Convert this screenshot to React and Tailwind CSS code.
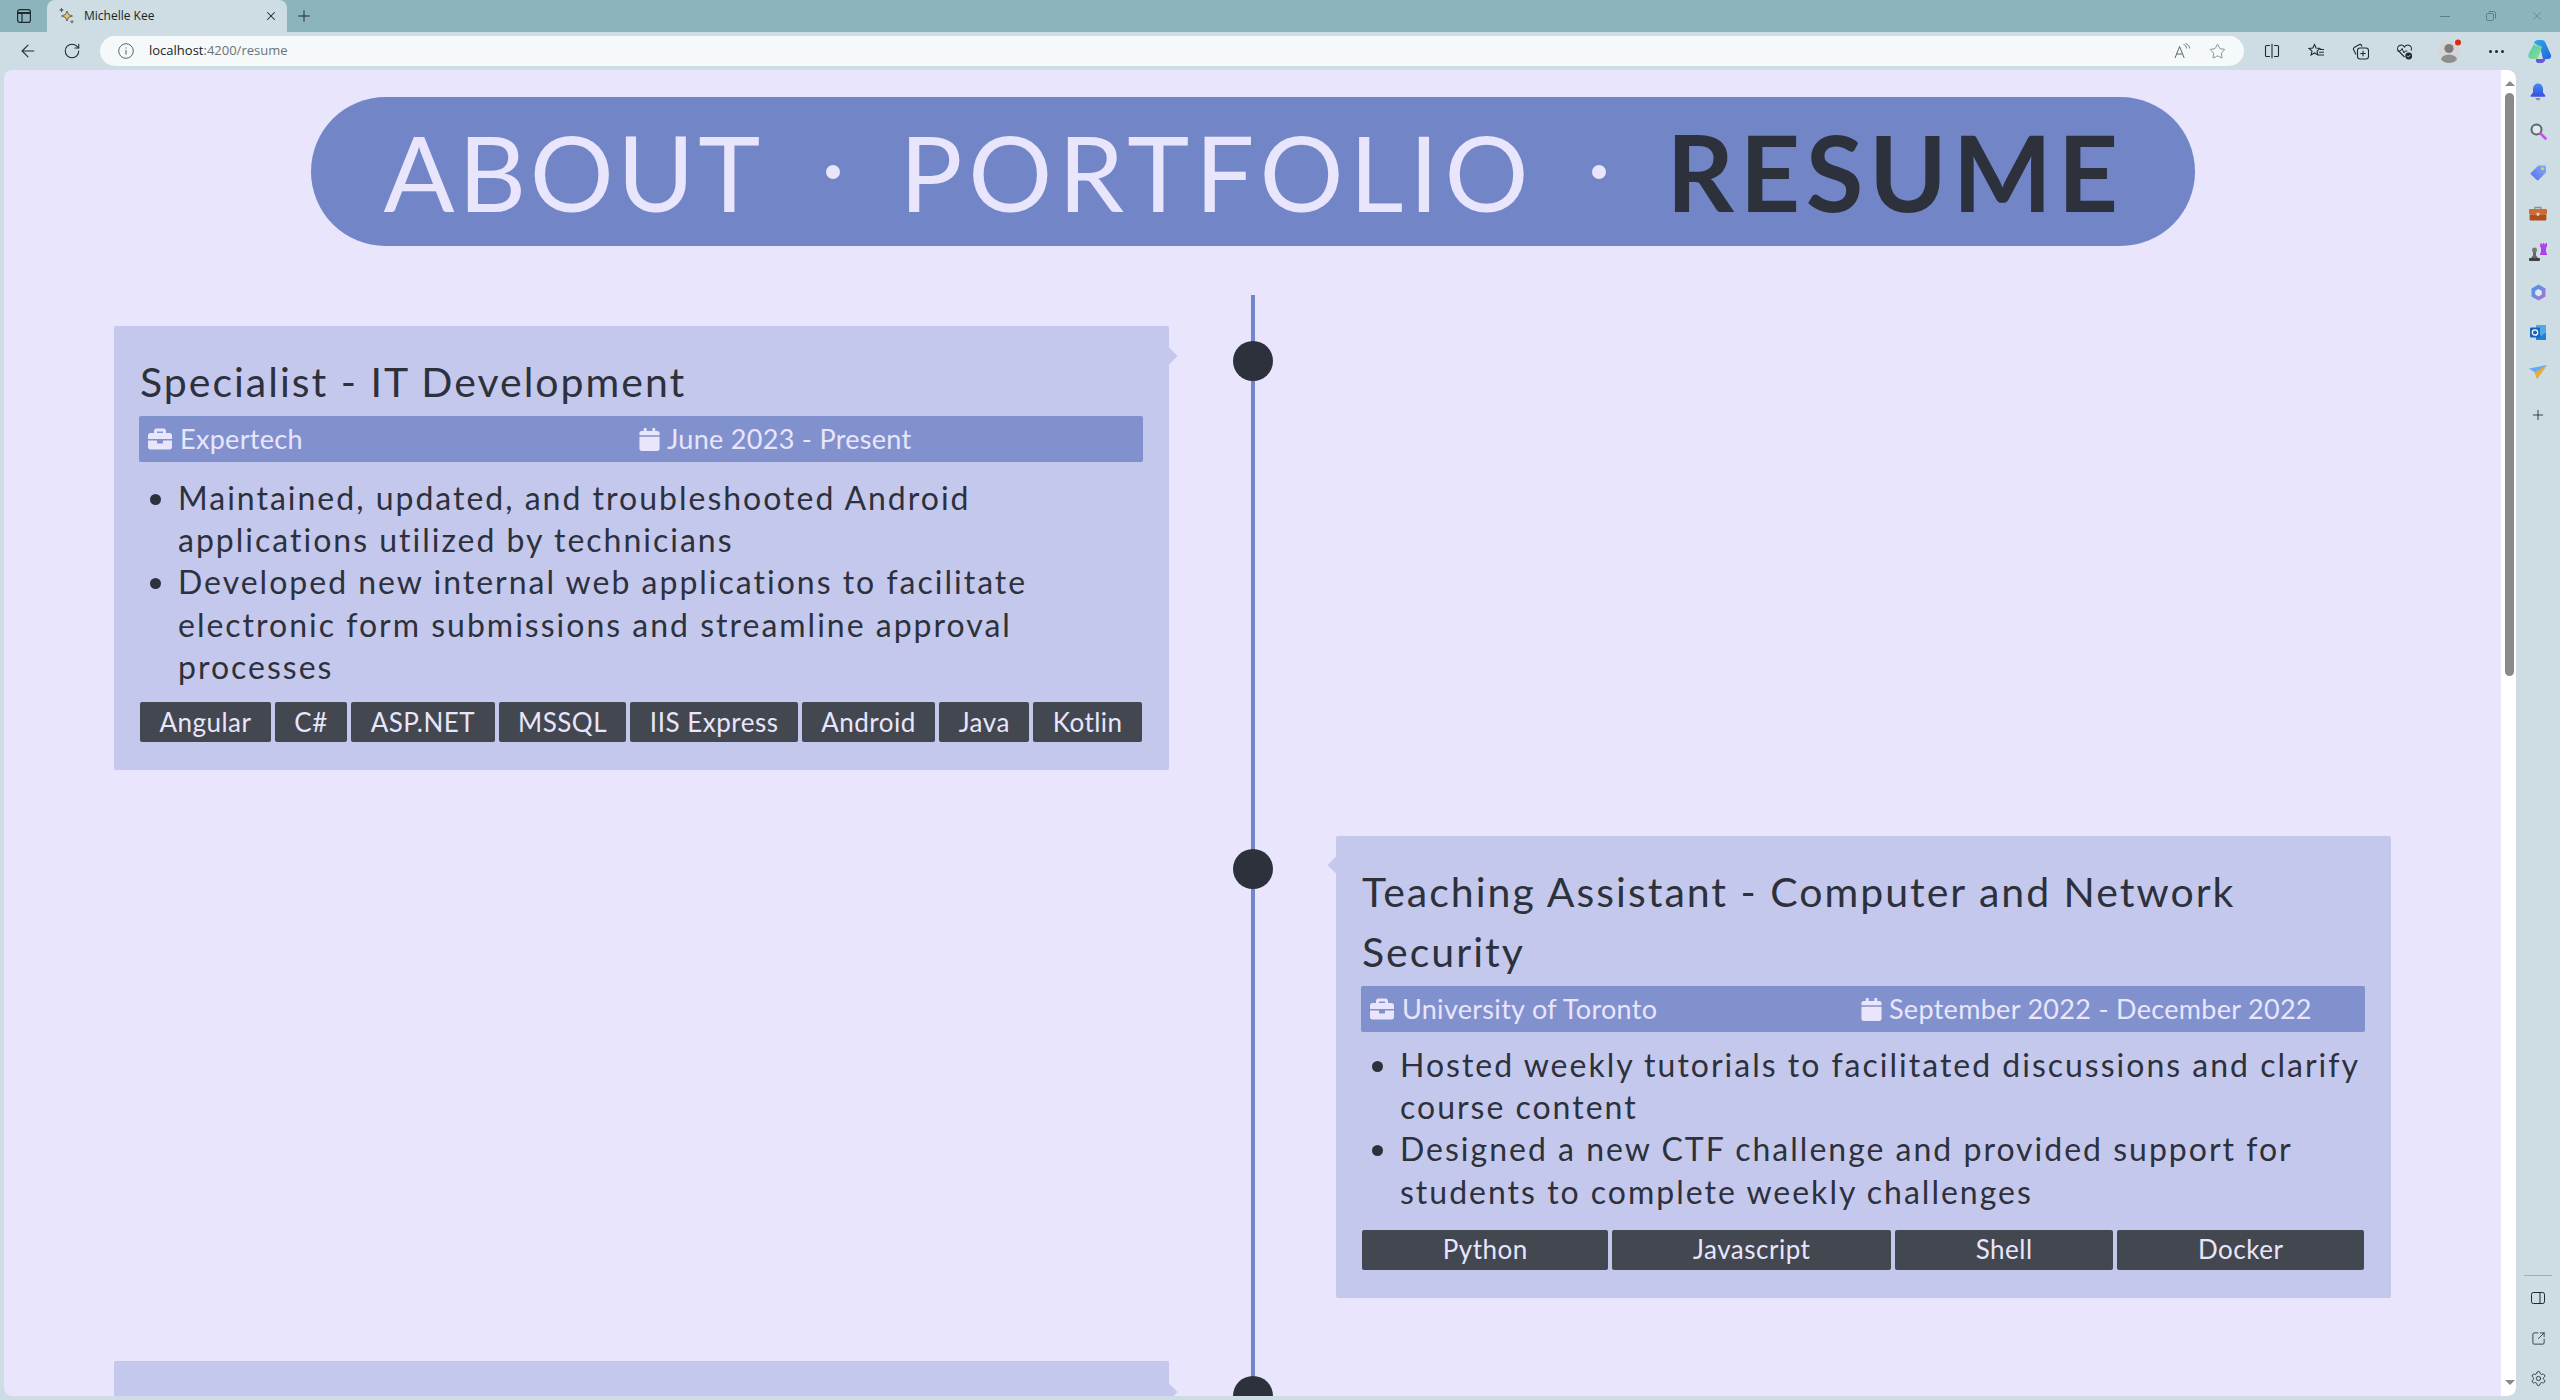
import React from "react";
import { ArrowLeft, RotateCw, X, Plus, Star, Settings, SquareArrowOutUpRight } from "lucide-react";
import { FaBriefcase, FaCalendar } from "react-icons/fa";

const TabsIcon = () => (
  <svg width="16" height="16" viewBox="0 0 16 16" fill="none" stroke="#1f2a30" strokeWidth="1.2">
    <rect x="1.6" y="1.6" width="12.8" height="12.8" rx="2.2" />
    <path d="M1.6 5h12.8" strokeWidth="2" />
    <path d="M6 5v9.4" />
  </svg>
);
const Sparkles = () => (
  <svg width="18" height="18" viewBox="0 0 18 18">
    <path d="M9 4l1.6 3.6L14.5 9l-3.9 1.4L9 14l-1.6-3.6L3.5 9l3.9-1.4z" fill="#e8c46a" stroke="#3b3b3b" strokeWidth=".7" />
    <path d="M3.5 0.5l.8 1.7 1.7.8-1.7.8-.8 1.7-.8-1.7L1 3l1.7-.8z" fill="#57534e" />
    <path d="M14 12.5l.7 1.6 1.6.7-1.6.7-.7 1.6-.7-1.6-1.6-.7 1.6-.7z" fill="#78716c" />
  </svg>
);
const InfoCircle = () => (
  <svg width="16" height="16" viewBox="0 0 16 16" fill="none" stroke="#5f6668" strokeWidth="1">
    <circle cx="8" cy="8" r="7.3" />
    <path d="M8 7v4.5M8 4.4v1.2" strokeWidth="1.1" />
  </svg>
);
const ReadAloud = () => (
  <svg width="17" height="16" viewBox="0 0 17 16" fill="none" stroke="#5f6668" strokeWidth="1">
    <path d="M1 15L5.6 3.5 10.2 15M2.6 11h6" />
    <path d="M9.5 1.5c2 .6 3 2 3.2 4M11.5 0.5c2.4.8 4 2.6 4.2 5" strokeWidth=".9" />
  </svg>
);
const SplitIcon = () => (
  <svg width="16" height="16" viewBox="0 0 16 16" fill="none" stroke="#1f2a30" strokeWidth="1.1">
    <path d="M6 2.5H2.5a1 1 0 0 0-1 1v9a1 1 0 0 0 1 1H6M10 2.5h3.5a1 1 0 0 1 1 1v9a1 1 0 0 1-1 1H10M8 .8v14.4" />
  </svg>
);
const FavIcon = () => (
  <svg width="17" height="17" viewBox="0 0 17 17" fill="none" stroke="#1f2a30" strokeWidth="1.1">
    <path d="M6.5 1.5l1.6 3.6 3.8.4-2.9 2.6.9 3.9-3.4-2-3.4 2 .9-3.9L1 5.5l3.800-.4z" />
    <path d="M12 6.500h4M11 9.200h5M10.500 12h5.500" />
  </svg>
);
const CollectIcon = () => (
  <svg width="17" height="17" viewBox="0 0 17 17" fill="none" stroke="#1f2a30" strokeWidth="1.1">
    <path d="M4 11.500L1.500 6.500a1.500 1.500 0 0 1 .7-2L7.500 1.500a1.500 1.500 0 0 1 1.800.6L10 3.500" />
    <rect x="5.500" y="5" width="11" height="11" rx="2.500" />
    <path d="M11 7.800v5.400M8.300 10.500h5.400" />
  </svg>
);
const HeartIcon = () => (
  <svg width="17" height="17" viewBox="0 0 17 17" fill="none">
    <path d="M8.500 14L2 7.500A3.400 3.400 0 0 1 8.500 4a3.400 3.400 0 0 1 6.500 3.500" stroke="#1f2a30" strokeWidth="1.1" />
    <path d="M1.500 8h3l1.500-2.500L8 10l1.300-2h2" stroke="#1f2a30" strokeWidth="1" />
    <circle cx="12.700" cy="13" r="3.400" fill="#1f2a30" />
    <path d="M11.200 13l1.100 1.100 1.900-2" stroke="#fff" strokeWidth=".8" />
  </svg>
);
const Profile = () => (
  <svg width="24" height="24" viewBox="0 0 24 24">
    <defs><clipPath id="pc"><circle cx="11" cy="13" r="11" /></clipPath></defs>
    <circle cx="11" cy="13" r="11" fill="#d6d6d6" />
    <g clipPath="url(#pc)">
      <circle cx="11" cy="9.500" r="4.600" fill="#7d7d7d" />
      <ellipse cx="11" cy="21" rx="8" ry="5.600" fill="#8e8e8e" />
    </g>
    <circle cx="20" cy="3.600" r="3" fill="#d92b14" />
  </svg>
);
const Copilot = () => (
  <svg width="25" height="23" viewBox="0 0 25 23">
    <defs>
      <linearGradient id="c1" x1="0" y1="0" x2="1" y2="1"><stop offset="0" stopColor="#38a9ee" /><stop offset="1" stopColor="#1f63dc" /></linearGradient>
      <linearGradient id="c2" x1="0" y1="0" x2="1" y2="1"><stop offset="0" stopColor="#4cc7b0" /><stop offset="1" stopColor="#8fe08c" /></linearGradient>
      <linearGradient id="c3" x1="0" y1="0" x2="1" y2="1"><stop offset="0" stopColor="#2c6de6" /><stop offset="1" stopColor="#8a4fd8" /></linearGradient>
    </defs>
    <path d="M7 3c.6-1.800 2-3 4-3h4c1.600 0 2.800 1 3.300 2.500L24 15c.6 2.200-1 4-3 4h-5L13 7z" fill="url(#c1)" />
    <path d="M7 4L2 13c-1.500 3-.5 6 3 6h3.500c1.500 0 2.600-1 3-2.300L15 7c-2-2.500-5-2-6-1z" fill="url(#c2)" />
    <path d="M9 19h7c1.800 0 2.800-1 3.300-2.500L20 15l-2 5.500c-.6 1.500-1.800 2.500-3.400 2.500H11c-1.500 0-2.500-2-2-4z" fill="url(#c3)" />
  </svg>
);

const Bell = () => (
  <svg width="16" height="18" viewBox="0 0 16 18">
    <defs><linearGradient id="b1" x1="0" y1="0" x2="0" y2="1"><stop offset="0" stopColor="#3f8cf0" /><stop offset="1" stopColor="#3a4fe0" /></linearGradient></defs>
    <path d="M8 0.500c-3 0-5 2.500-5 5.500v3.500L.7 12.500c-.3.600 0 1.200.7 1.200h13.200c.7 0 1-.6.7-1.200L13 9.500V6c0-3-2-5.500-5-5.500z" fill="url(#b1)" />
    <path d="M5.500 15h5c-.3 1.500-1.200 2.500-2.500 2.500S5.800 16.500 5.500 15z" fill="#8a8f98" />
  </svg>
);
const Search = () => (
  <svg width="17" height="17" viewBox="0 0 17 17" fill="none">
    <circle cx="6.500" cy="6.500" r="5" stroke="#5c6470" strokeWidth="2" fill="#dfe9ee" />
    <path d="M10.500 10.500l5 5" stroke="#c850e0" strokeWidth="2.600" strokeLinecap="round" />
  </svg>
);
const Tag = () => (
  <svg width="17" height="17" viewBox="0 0 17 17">
    <defs><linearGradient id="t1" x1="0" y1="1" x2="1" y2="0"><stop offset="0" stopColor="#5a6cf0" /><stop offset="1" stopColor="#7ab0fa" /></linearGradient></defs>
    <path d="M9 1.500h6c.6 0 1 .4 1 1V8c0 .5-.2.800-.5 1.100L8.500 16c-.5.500-1.200.500-1.700 0L1 10.500c-.500-.5-.500-1.200 0-1.700l7-7c.300-.2.600-.3 1-.3z" fill="url(#t1)" />
    <circle cx="12.500" cy="4.800" r="1.500" fill="#f6d23c" />
  </svg>
);
const Toolbox = () => (
  <svg width="18" height="15" viewBox="0 0 18 15">
    <path d="M6 3V1.500h6V3" fill="none" stroke="#8f8f8f" strokeWidth="1.300" />
    <rect x="0" y="3" width="18" height="5.500" rx="1" fill="#d36a2b" />
    <rect x="0.600" y="8.500" width="16.800" height="6" rx="1" fill="#b24c1b" />
    <rect x="7.700" y="6.800" width="2.600" height="3" rx=".5" fill="#d6d6d6" />
  </svg>
);
const Chess = () => (
  <svg width="18" height="18" viewBox="0 0 18 18">
    <path d="M11.500 0h1.200v1.200h1.300V0h1.200v1.200h1.300V0H18v3.500l-1 1.200V9l1 2v1h-7v-1l1-2V4.700l-1-1.200z" fill="#b040ee" />
    <circle cx="5.500" cy="7" r="2.500" fill="#777" />
    <path d="M4 9h3v3.500l2 2.500H2l2-2.500z" fill="#666" />
    <rect x="0" y="15" width="11" height="3" rx="1" fill="#3f3f3f" />
  </svg>
);
const M365 = () => (
  <svg width="17" height="17" viewBox="0 0 17 17">
    <defs><linearGradient id="m1" x1="0" y1="0" x2="1" y2="1"><stop offset="0" stopColor="#3aa0e8" /><stop offset="1" stopColor="#b46cd8" /></linearGradient></defs>
    <path d="M8.500.500L15.500 4.500v8l-7 4-7-4v-8z" fill="url(#m1)" />
    <path d="M8.500 5l3.300 1.900v3.600L8.500 12.400 5.200 10.500V6.900z" fill="#dfe9ee" />
  </svg>
);
const Outlook = () => (
  <svg width="17" height="17" viewBox="0 0 17 17">
    <path d="M6 1h10v15H6z" fill="#50a8e8" />
    <path d="M6 8.500l5 3.500 5-3.500V16H6z" fill="#1b80d8" />
    <rect x="0" y="3.500" width="10" height="10" rx="1" fill="#1363c0" />
    <circle cx="5" cy="8.500" r="2.700" fill="none" stroke="#fff" strokeWidth="1.300" />
  </svg>
);
const Plane = () => (
  <svg width="18" height="14" viewBox="0 0 18 14">
    <path d="M0 3.500L18 0 8 14 6 7.500z" fill="#6aa8f5" />
    <path d="M18 0L6 7.500 8 14z" fill="#eeae2c" />
  </svg>
);
const PanelIcon = () => (
  <svg width="14" height="14" viewBox="0 0 14 14" fill="none" stroke="#1f2a30" strokeWidth="1">
    <rect x=".5" y="1.500" width="13" height="11" rx="1.800" />
    <path d="M9 1.500v11" />
  </svg>
);

const Chrome = () => (
  <>
    <div className="flex h-8 w-full bg-[#8bb4bd]">
      <div className="flex w-[47px] items-center justify-center"><TabsIcon /></div>
      <div className="flex w-[240px] items-center rounded-t-lg bg-[#cddde3] pl-[11px] pr-2 text-[12px] text-[#1b2326]">
        <Sparkles />
        <span className="ml-[8px] flex-1">Michelle Kee</span>
        <X size={14} strokeWidth={1.800} className="mr-[1px]" color="#1f2a30" />
      </div>
      <div className="flex w-[34px] items-center justify-center"><Plus size={18} strokeWidth={1.300} color="#1f2a30" /></div>
      <div className="flex-1" />
      <div className="flex w-[46px] items-center justify-center"><div className="h-px w-[10px] bg-[#5d7f87]" /></div>
      <div className="flex w-[46px] items-center justify-center">
        <svg width="10" height="10" viewBox="0 0 10 10" fill="none" stroke="#5d7f87"><rect x=".5" y="2.500" width="7" height="7" rx="1.200" /><path d="M2.500 .5h5a2 2 0 0 1 2 2v5" /></svg>
      </div>
      <div className="flex w-[46px] items-center justify-center"><X size={14} strokeWidth={1.200} color="#5d7f87" /></div>
    </div>
    <div className="flex h-[38px] w-full items-center bg-[#cddde3]">
      <div className="flex w-[56px] justify-center"><ArrowLeft size={20} strokeWidth={1.300} color="#1f2a30" /></div>
      <div className="flex w-[32px] justify-center"><RotateCw size={18} strokeWidth={1.400} color="#1f2a30" /></div>
      <div className="ml-[12px] flex h-[30px] w-[2144px] items-center rounded-full bg-[#f5f9fa] pl-[18px] pr-[16px]">
        <InfoCircle />
        <span className="ml-[15px] flex-1 text-[13px]" ><span className="text-[#1b2326]">localhost</span><span className="text-[#6b7274]">:4200/resume</span></span>
        <span className="mr-[2px] flex w-[41px] justify-center"><ReadAloud /></span>
        <span className="-mr-[2px] flex w-[25px] justify-center"><Star size={17} strokeWidth={1} color="#5f6668" /></span>
      </div>
      <div className="ml-[6px] flex w-[44px] justify-center"><SplitIcon /></div>
      <div className="flex w-[44px] justify-center"><FavIcon /></div>
      <div className="flex w-[44px] justify-center"><CollectIcon /></div>
      <div className="flex w-[44px] justify-center"><HeartIcon /></div>
      <div className="flex w-[48px] justify-center"><Profile /></div>
      <div className="flex w-[44px] justify-center gap-[3px]">
        <i className="size-[3px] rounded-full bg-[#1f2a30]" /><i className="size-[3px] rounded-full bg-[#1f2a30]" /><i className="size-[3px] rounded-full bg-[#1f2a30]" />
      </div>
      <div className="flex w-[42px] justify-center"><Copilot /></div>
    </div>
  </>
);

const Sidebar = () => (
  <div className="flex h-[1326px] w-[44px] flex-col items-center bg-[#cddde3]">
    <div className="mt-[13px] flex h-[18px] items-center"><Bell /></div>
    <div className="mt-[21px] flex h-[18px] items-center"><Search /></div>
    <div className="mt-[23px] flex h-[18px] items-center"><Tag /></div>
    <div className="mt-[23px] flex h-[18px] items-center"><Toolbox /></div>
    <div className="mt-[21px] flex h-[18px] items-center"><Chess /></div>
    <div className="mt-[22px] flex h-[18px] items-center"><M365 /></div>
    <div className="mt-[22px] flex h-[18px] items-center"><Outlook /></div>
    <div className="mt-[22px] flex h-[18px] items-center"><Plane /></div>
    <div className="mt-[25px] flex h-[18px] items-center"><Plus size={16} strokeWidth={1.300} color="#1f2a30" /></div>
    <div className="flex-1" />
    <div className="h-px w-[28px] bg-[#9fb0b7]" />
    <div className="mt-[15px] flex h-[14px] items-center"><PanelIcon /></div>
    <div className="mt-[26px] flex h-[14px] items-center"><SquareArrowOutUpRight size={15} strokeWidth={1.300} color="#1f2a30" /></div>
    <div className="mb-[11px] mt-[26px] flex h-[14px] items-center"><Settings size={17} strokeWidth={1.200} color="#1f2a30" /></div>
  </div>
);

const Scrollbar = () => (
  <div className="flex h-full w-[15px] flex-col items-center rounded-r-lg bg-white pl-[2px]">
    <div className="mt-[11px] size-0 border-x-[5px] border-b-[5px] border-x-transparent border-b-[#8a8a8a]" />
    <div className="mt-[7px] h-[583px] w-[9px] rounded-full bg-[#8a8a8a]" />
    <div className="flex-1" />
    <div className="mb-[11px] size-0 border-x-[5px] border-t-[5px] border-x-transparent border-t-[#8a8a8a]" />
  </div>
);

const Sep = () => (
  <span className="flex w-[4px] justify-center">
    <i className="block size-[14px] shrink-0 rounded-full bg-[#e8e5fc]" />
  </span>
);

const Nav = () => (
  <nav className="mx-auto mt-[27px] flex h-[149px] w-[1884px] items-center rounded-[75px] bg-[#7285c7] pl-[73px] text-[105px] font-normal leading-none text-[#e8e5fc]">
    <span className="w-[378px] tracking-[3.600px]">ABOUT</span>
    <span className="ml-[69px] flex"><Sep /></span>
    <span className="ml-[65px] w-[629px] tracking-[5.800px]">PORTFOLIO</span>
    <span className="ml-[68px] flex"><Sep /></span>
    <span className="ml-[66px] font-bold tracking-[5.700px] text-[#2d313c]">RESUME</span>
  </nav>
);

const jobs = [
  {
    title: "Specialist - IT Development",
    org: "Expertech",
    date: "June 2023 - Present",
    listClass: "mb-[14px] mt-[15px]",
    points: [
      "Maintained, updated, and troubleshooted Android applications utilized by technicians",
      "Developed new internal web applications to facilitate electronic form submissions and streamline approval processes",
    ],
    tags: ["Angular", "C#", "ASP.NET", "MSSQL", "IIS Express", "Android", "Java", "Kotlin"],
  },
  {
    title: "Teaching Assistant - Computer and Network Security",
    org: "University of Toronto",
    date: "September 2022 - December 2022",
    listClass: "mb-[17px] mt-[12px]",
    points: [
      "Hosted weekly tutorials to facilitated discussions and clarify course content",
      "Designed a new CTF challenge and provided support for students to complete weekly challenges",
    ],
    tags: ["Python", "Javascript", "Shell", "Docker"],
  },
];

const Card = ({ job, side }) => (
  <div className="relative w-[1055px] rounded-[2px] bg-[#c5c8ed] pb-[28px] pl-[25px] pr-[26px] pt-[26px]">
    {side === "left" ? (
      <div className="absolute right-[-6px] top-[24px] size-[12px] rotate-45 bg-[#c5c8ed]" />
    ) : (
      <div className="absolute left-[-6px] top-[23px] size-[12px] rotate-45 bg-[#c5c8ed]" />
    )}
    <h2 className="pl-px text-[41px] leading-[60px] tracking-[2px] text-[#2d313c]">{job.title}</h2>
    <div className="mt-[4px] grid h-[46px] grid-cols-2 items-center rounded-[2px] bg-[#8191cd] text-[27px] tracking-[.3px] text-[#e8e5fc]">
      <div className="flex items-center pl-[9px]"><FaBriefcase size={24} className="mr-[8px]" />{job.org}</div>
      <div className="flex items-center"><FaCalendar size={23} className="-ml-[3px] mr-[6px]" />{job.date}</div>
    </div>
    <ul className={`list-disc pl-[39px] text-[32px] leading-[42.200px] tracking-[2px] text-[#2d313c] ${job.listClass}`}>
      {job.points.map((p) => <li key={p}>{p}</li>)}
    </ul>
    <div className="flex gap-[4px] px-px">
      {job.tags.map((t) => (
        <span key={t} className="flex h-[40px] grow items-center justify-center rounded-[2px] bg-[#434750] px-[19px] text-[26px] tracking-[.5px] text-[#e8e5fc]">{t}</span>
      ))}
    </div>
  </div>
);

export default function App() {
  return (
    <div className="flex h-[1400px] w-[2560px] flex-col overflow-hidden bg-[#cddde3]" style={{ fontFamily: '"Open Sans", sans-serif' }}>
      <Chrome />
      <div className="flex">
        <div className="w-[4px]" />
        <div className="flex h-[1326px] w-[2512px] overflow-hidden rounded-lg">
          <main className="h-full w-[2497px] overflow-hidden bg-[#e8e5fc]" style={{ fontFamily: 'Lato, sans-serif' }}>
            <Nav />
            <div className="relative mt-[49px] h-[1200px]">
              <div className="absolute bottom-0 left-1/2 top-0 w-[4px] -translate-x-1/2 bg-[#7285c7]" />
              <div className="relative mx-[110px] flex justify-start pt-[31px]">
                <div className="absolute left-1/2 top-[46px] size-[40px] -translate-x-1/2 rounded-full bg-[#2d313c]" />
                <Card job={jobs[0]} side="left" />
              </div>
              <div className="relative mx-[110px] mt-[66px] flex justify-end">
                <div className="absolute left-1/2 top-[13px] size-[40px] -translate-x-1/2 rounded-full bg-[#2d313c]" />
                <Card job={jobs[1]} side="right" />
              </div>
              <div className="relative mx-[110px] mt-[63px] flex justify-start">
                <div className="absolute left-1/2 top-[15px] size-[40px] -translate-x-1/2 rounded-full bg-[#2d313c]" />
                <div className="relative h-[300px] w-[1055px] rounded-[2px] bg-[#c5c8ed]">
                  <div className="absolute right-[-6px] top-[25px] size-[12px] rotate-45 bg-[#c5c8ed]" />
                </div>
              </div>
            </div>
          </main>
          <Scrollbar />
        </div>
        <Sidebar />
      </div>
    </div>
  );
}
